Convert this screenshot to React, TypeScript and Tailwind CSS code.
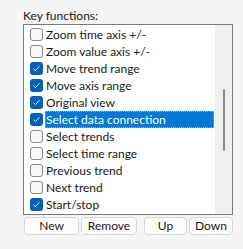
import React from "react";

const items: { label: string; checked: boolean }[] = [
  { label: "Zoom time axis +/-", checked: false },
  { label: "Zoom value axis +/-", checked: false },
  { label: "Move trend range", checked: true },
  { label: "Move axis range", checked: true },
  { label: "Original view", checked: true },
  { label: "Select data connection", checked: true },
  { label: "Select trends", checked: false },
  { label: "Select time range", checked: false },
  { label: "Previous trend", checked: false },
  { label: "Next trend", checked: false },
  { label: "Start/stop", checked: true },
];

function Box({ checked }: { checked: boolean }) {
  if (checked) {
    return (
      <div className="w-[13px] h-[13px] rounded-[3px] bg-[#005fb8] flex items-center justify-center shrink-0">
        <svg width="9" height="9" viewBox="0 0 9 9">
          <path d="M1.5 4.8 L3.5 6.6 L7.5 2.2" fill="none" stroke="#dbe8f5" strokeWidth="1" />
        </svg>
      </div>
    );
  }
  return <div className="w-[13px] h-[13px] rounded-[3px] border border-[#8b8b8b] bg-[#f7f7f7] shrink-0" />;
}

function Btn({ label, w }: { label: string; w: string }) {
  return (
    <div
      className={`${w} h-[18px] rounded-[4px] border border-[#d5d5d5] bg-[#fdfdfd] flex items-center justify-center text-[12px] text-[#1a1a1a] leading-none`}
    >
      {label}
    </div>
  );
}

export default function App() {
  return (
    <div className="w-[243px] h-[249px] bg-[#f5f5f5] flex font-['Lato','Noto_Sans',sans-serif]">
      <div className="w-[8px] h-full bg-[#f1f1f1]" />
      <div className="flex flex-col pl-[15px] pt-[8px]">
        <div className="text-[12px] leading-[16px] text-[#1a1a1a] h-[16px]">Key functions:</div>
        <div className="w-[210px] h-[191px] border border-[#7a7a7a] bg-white flex">
          <div className="flex-1 flex flex-col pt-[1px]">
            {items.map((it, i) => (
              <div key={i} className="h-[17px] flex items-center">
                <div className="w-[21px] flex items-center justify-end pr-[2px] pl-[5px]">
                  <Box checked={it.checked} />
                </div>
                {i === 5 ? (
                  <div className="h-[17px] flex items-center bg-[#0078d7] text-white text-[12px] leading-none pl-[1px] w-[169px] outline-1 outline-dotted outline-[#e8a04a] -outline-offset-1 whitespace-nowrap">
                    {it.label}
                  </div>
                ) : (
                  <div className="text-[12px] leading-none text-[#1a1a1a] pl-[1px] whitespace-nowrap">{it.label}</div>
                )}
              </div>
            ))}
          </div>
          <div className="w-[17px] bg-[#efefef] flex justify-center">
            <div className="w-[2px] mt-[64px] h-[62px] bg-[#8a8a8a] rounded-full" />
          </div>
        </div>
        <div className="flex mt-[2px] ml-[1px] gap-[2px]">
          <Btn label="New" w="w-[55px]" />
          <Btn label="Remove" w="w-[56px]" />
          <div className="w-[3px]" />
          <Btn label="Up" w="w-[43px]" />
          <Btn label="Down" w="w-[44px]" />
        </div>
      </div>
    </div>
  );
}
